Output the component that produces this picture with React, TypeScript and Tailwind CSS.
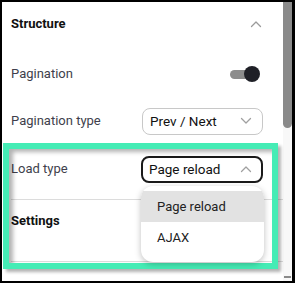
import React from "react";

function ChevronUp({ className = "" }: { className?: string }) {
  return (
    <svg width="12" height="8" viewBox="0 0 12 8" className={className} fill="none">
      <path d="M1.5 6.5L6 2L10.5 6.5" stroke="currentColor" strokeWidth="1.3" strokeLinecap="round" strokeLinejoin="round" />
    </svg>
  );
}
function ChevronDown({ className = "" }: { className?: string }) {
  return (
    <svg width="12" height="8" viewBox="0 0 12 8" className={className} fill="none">
      <path d="M1.5 1.5L6 6L10.5 1.5" stroke="currentColor" strokeWidth="1.3" strokeLinecap="round" strokeLinejoin="round" />
    </svg>
  );
}

export default function App() {
  return (
    <div
      className="relative w-[295px] h-[283px] overflow-hidden bg-white border-t-2 border-l-2 border-b-2 border-r-[3px] border-black flex"
      style={{ fontFamily: "Roboto, 'Liberation Sans', sans-serif" }}
    >
      <div className="flex-1 flex flex-col pl-[9px] pr-[20px] text-[13px]">
        <div className="h-[44px] flex items-center justify-between">
          <span className="font-bold text-[#111] text-[13px]">Structure</span>
          <ChevronUp className="text-[#9a9a9a] mr-[1px]" />
        </div>
        <div className="h-[56px] flex items-center justify-between">
          <span className="text-[#403f4c]">Pagination</span>
          <div className="relative w-[30px] h-[16px] flex items-center mr-[3px]">
            <div className="w-[24px] h-[9px] rounded-full bg-[#8c8c8c]" />
            <div className="absolute right-0 top-0 w-[16px] h-[16px] rounded-full bg-[#1f2027]" />
          </div>
        </div>
        <div className="h-[38px] flex items-center justify-between">
          <span className="text-[#403f4c]">Pagination type</span>
          <div className="w-[121px] h-[27px] rounded-[8px] border border-[#c8c8c8] flex items-center justify-between pl-[7px] pr-[10px]">
            <span className="text-[#111] text-[13.5px]">Prev / Next</span>
            <ChevronDown className="text-[#a0a0a0]" />
          </div>
        </div>
        <div className="h-[59px] flex items-center justify-between pb-[1px]">
          <span className="text-[#403f4c]">Load type</span>
          <div className="w-[122px] h-[27px] rounded-[8px] border-2 border-[#1a1a1a] flex items-center justify-between pl-[6px] pr-[9px]">
            <span className="text-[#111] text-[13.5px]">Page reload</span>
            <ChevronUp className="text-[#a0a0a0]" />
          </div>
        </div>
        <div className="h-px bg-[#dcdcdc] -mr-[20px]" />
        <div className="h-[38px] flex items-center pt-[3px]">
          <span className="font-bold text-[#111] text-[13px]">Settings</span>
        </div>
        <div className="h-[23px]" />
        <div className="h-px bg-[#dcdcdc] -mr-[20px]" />
      </div>
      <div className="w-[9px] bg-[#f8f8f8] relative">
        <div className="w-[9px] h-[126px] bg-[#8a8a8a] rounded-b-[5px]" />
        <div className="absolute bottom-[3px] left-[1px] w-[7px] h-[2px] bg-[#8a8a8a]" />
      </div>

      {/* highlight */}
      <div className="absolute left-[1px] top-[141px] w-[275px] h-[126px] border-[6px] border-[#45ecb5] pointer-events-none shadow-[3px_3px_3px_rgba(0,0,0,0.3),inset_4px_3px_4px_rgba(0,0,0,0.3)]" />

      {/* dropdown menu */}
      <div className="absolute left-[139px] top-[184px] w-[123px] h-[76px] bg-white rounded-[12px] shadow-[0_2px_6px_rgba(0,0,0,0.25)] overflow-hidden py-[5px] text-[13px] text-[#222]">
        <div className="h-[31px] bg-[#e2e2e2] flex items-center pl-[16px]">Page reload</div>
        <div className="h-[31px] flex items-center pl-[16px]">AJAX</div>
      </div>
    </div>
  );
}
